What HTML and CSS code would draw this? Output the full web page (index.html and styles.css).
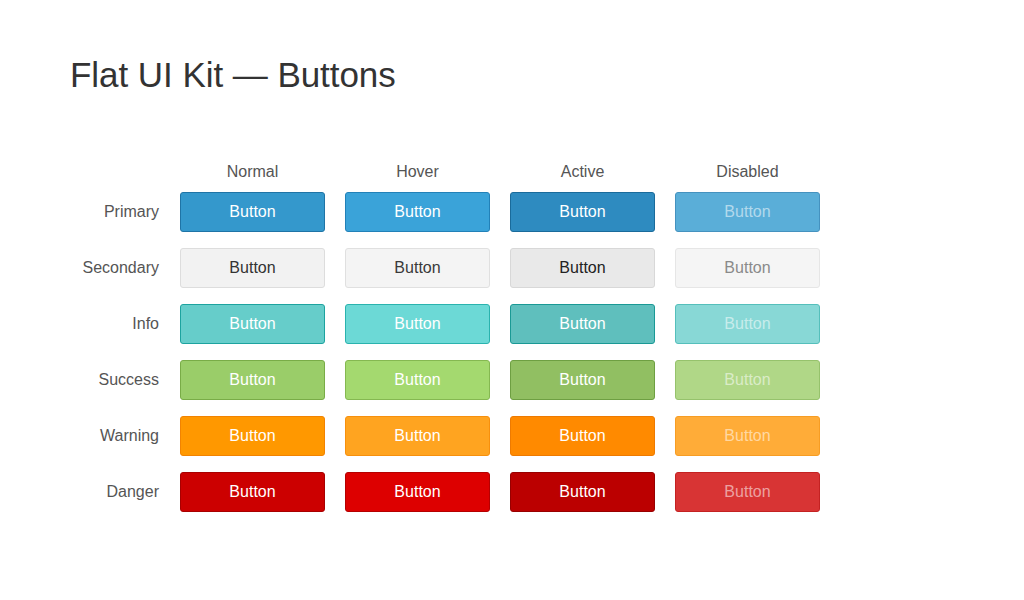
FILE: index.html
```html
<!DOCTYPE html>
<html lang="en">
<head>
<meta charset="utf-8">
<title>Flat UI Kit — Buttons</title>
<link rel="stylesheet" href="styles.css">
</head>
<body>
<main class="page">
  <h1 class="title">Flat UI Kit — Buttons</h1>
  <section class="kit">
    <div class="head">
      <span></span>
      <span class="col-label">Normal</span>
      <span class="col-label">Hover</span>
      <span class="col-label">Active</span>
      <span class="col-label">Disabled</span>
    </div>
    <div class="rows">
      <span class="row-label">Primary</span>
      <button class="btn primary">Button</button>
      <button class="btn primary hover">Button</button>
      <button class="btn primary active">Button</button>
      <button class="btn primary disabled">Button</button>

      <span class="row-label">Secondary</span>
      <button class="btn secondary">Button</button>
      <button class="btn secondary hover">Button</button>
      <button class="btn secondary active">Button</button>
      <button class="btn secondary disabled">Button</button>

      <span class="row-label">Info</span>
      <button class="btn info">Button</button>
      <button class="btn info hover">Button</button>
      <button class="btn info active">Button</button>
      <button class="btn info disabled">Button</button>

      <span class="row-label">Success</span>
      <button class="btn success">Button</button>
      <button class="btn success hover">Button</button>
      <button class="btn success active">Button</button>
      <button class="btn success disabled">Button</button>

      <span class="row-label">Warning</span>
      <button class="btn warning">Button</button>
      <button class="btn warning hover">Button</button>
      <button class="btn warning active">Button</button>
      <button class="btn warning disabled">Button</button>

      <span class="row-label">Danger</span>
      <button class="btn danger">Button</button>
      <button class="btn danger hover">Button</button>
      <button class="btn danger active">Button</button>
      <button class="btn danger disabled">Button</button>
    </div>
  </section>
</main>
</body>
</html>
```
FILE: styles.css
```css
html, body {
  margin: 0;
  padding: 0;
  background: #ffffff;
}

body {
  font-family: "Liberation Sans", Arial, sans-serif;
  color: #333333;
}

.page {
  padding: 55px 0 0 70px;
}

.title {
  margin: 0 0 67px 0;
  font-size: 35px;
  line-height: 40px;
  font-weight: normal;
  letter-spacing: -0.05px;
  color: #333333;
}

.head,
.rows {
  display: grid;
  grid-template-columns: 90px repeat(4, 145px);
  column-gap: 20px;
}

.head {
  margin-bottom: 10px;
  line-height: 20px;
}

.col-label {
  font-size: 16px;
  text-align: center;
  color: #555555;
}

.rows {
  grid-auto-rows: 40px;
  row-gap: 16px;
  align-items: center;
}

.row-label {
  font-size: 16px;
  text-align: right;
  padding-right: 1px;
  color: #555555;
}

.btn {
  box-sizing: border-box;
  height: 40px;
  margin: 0;
  padding: 0;
  border: 1px solid;
  border-radius: 3px;
  font-family: "Liberation Sans", Arial, sans-serif;
  font-size: 16px;
  line-height: 38px;
  color: #ffffff;
  cursor: pointer;
}

.btn.disabled {
  color: rgba(255, 255, 255, 0.55);
  cursor: default;
}

/* Primary */
.primary { background: #3498cc; border-color: #1f74a6; }
.primary.hover { background: #3aa3d9; border-color: #2281b8; }
.primary.active { background: #2e8bc0; border-color: #1a6b9b; }
.primary.disabled { background: #5aaed8; border-color: #4592bf; }

/* Secondary */
.secondary { background: #f2f2f2; border-color: #dddddd; color: #333333; }
.secondary.hover { background: #f4f4f4; border-color: #e0e0e0; color: #3a3a3a; }
.secondary.active { background: #e9e9e9; border-color: #d8d8d8; color: #222222; }
.secondary.disabled { background: #f5f5f5; border-color: #e6e6e6; color: #8a8a8a; }

/* Info */
.info { background: #66cdca; border-color: #1da39f; }
.info.hover { background: #6cd9d6; border-color: #2ab3ae; }
.info.active { background: #5fbfbd; border-color: #1a9995; }
.info.disabled { background: #88d8d6; border-color: #55bfbb; }

/* Success */
.success { background: #9acd69; border-color: #79ac47; }
.success.hover { background: #a4d96f; border-color: #85b851; }
.success.active { background: #91bf62; border-color: #6e9f42; }
.success.disabled { background: #b0d787; border-color: #96c26c; }

/* Warning */
.warning { background: #ff9800; border-color: #f28300; }
.warning.hover { background: #ffa420; border-color: #f7900d; }
.warning.active { background: #ff8a00; border-color: #ee7a00; }
.warning.disabled { background: #ffac38; border-color: #f79d24; }

/* Danger */
.danger { background: #cc0000; border-color: #a80000; }
.danger.hover { background: #dd0000; border-color: #b50000; }
.danger.active { background: #bb0000; border-color: #980000; }
.danger.disabled { background: #d83434; border-color: #c42222; }
```
